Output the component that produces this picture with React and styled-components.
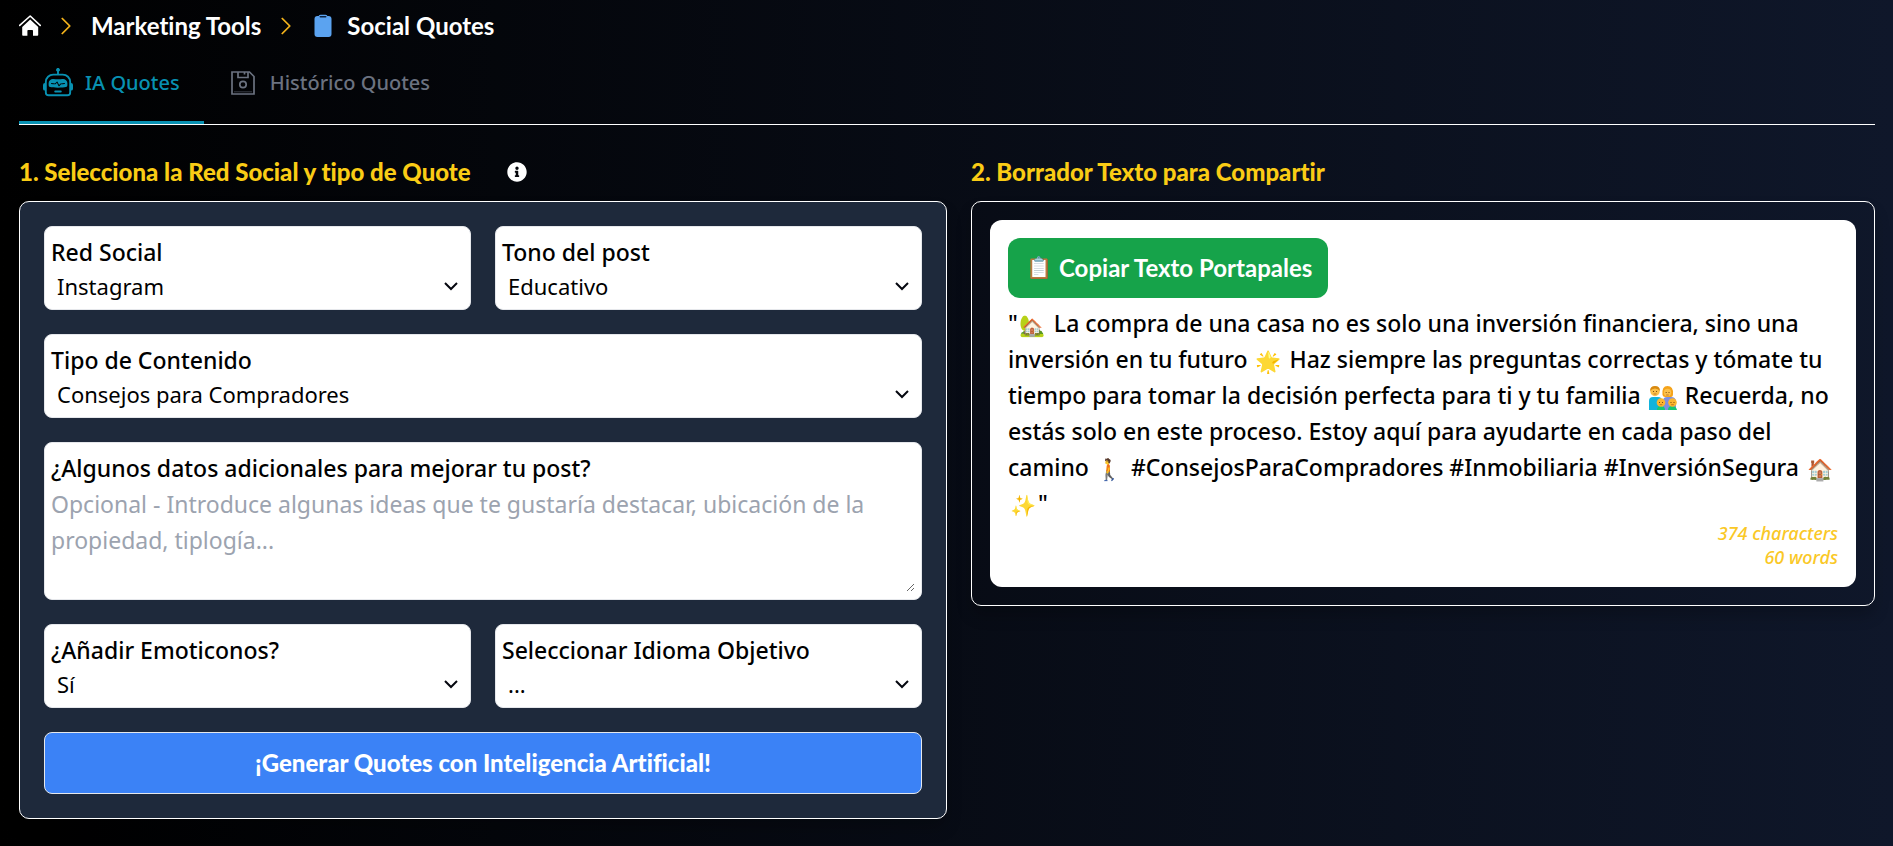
import React, { useState } from "react";
import styled, { createGlobalStyle } from "styled-components";
import { BsChevronRight, BsRobot } from "react-icons/bs";
import { FaInfoCircle } from "react-icons/fa";

const titleFont = `Lato, "Open Sans", sans-serif`;
const bodyFont = `"Noto Sans", "Open Sans", sans-serif`;

function HomeIcon() {
  return (
    <svg width="22" height="22" viewBox="0 0 22 22" aria-hidden="true">
      <path
        d="M1.500 10.400 12 1l10 9.400"
        transform="translate(-.8 0)"
        fill="none"
        stroke="#fff"
        strokeWidth="1.6"
        strokeLinecap="round"
        strokeLinejoin="round"
      />
      <path
        d="M11.200 4.400 19.200 12v8a.8.8 0 0 1-.8.8H14v-5a.8.8 0 0 0-.8-.8H9.200a.8.8 0 0 0-.8.8v5H4a.8.8 0 0 1-.8-.8v-8z"
        fill="#fff"
      />
    </svg>
  );
}

function ClipboardIcon() {
  return (
    <svg width="24" height="24" viewBox="0 0 24 24" aria-hidden="true">
      <rect x="3.500" y="2" width="17" height="21" rx="3" fill="#5ba3f0" />
      <rect x="7.500" y="0.8" width="9" height="4" rx="2" fill="#5ba3f0" />
      <rect x="8.500" y="2" width="7" height="1.6" rx="0.8" fill="#0c2340" />
    </svg>
  );
}

function SaveIcon() {
  return (
    <svg
      width="30"
      height="30"
      viewBox="0 0 30 30"
      fill="none"
      stroke="currentColor"
      strokeWidth="1.7"
      aria-hidden="true"
    >
      <path d="M4 4h17.500L26 8.500V26H4z" />
      <path d="M10 4v5.500h10V4M16.500 4v2.500" />
      <circle cx="15" cy="16.500" r="3.200" />
      <path d="M6.500 23.800h17" strokeDasharray="1 1" strokeWidth="1" />
    </svg>
  );
}

function FamilyIcon() {
  return (
    <FamilySvg viewBox="0 0 28 24" role="img" aria-label="Familia">
      <path d="M0 24V15q0-4 4-4h5q4 0 4 4v9z" fill="#12b3dc" />
      <path d="M14 24V15q0-4 4-4h4q5 0 5 5v8z" fill="#7c8fe0" />
      <path
        d="M13.500 9q-1-9 5-9t5.500 8q0 3-2 3h-6q-2 0-2.500-2z"
        fill="#f5a31a"
      />
      <circle cx="6" cy="5.500" r="4.700" fill="#fcc04a" />
      <path d="M1 5q0-5 5-5t5 5Q9 2.500 6 2.500T1 5z" fill="#d98a10" />
      <circle cx="18.500" cy="6.500" r="3.700" fill="#fcc04a" />
      <path d="M8 24q0-4 4-4t4 4z" fill="#16c872" />
      <path d="M19 24q0-4 4-4t5 4z" fill="#16c872" />
      <circle cx="12" cy="16.500" r="4.300" fill="#fcb62f" />
      <circle cx="23.500" cy="16.500" r="4.300" fill="#fcb62f" />
      <path
        d="M4.500 5v1M7.500 5v1M17.200 6v1M20 6v1M10.500 16v1M13.500 16v1M22 16v1M25 16v1"
        stroke="#7a4a10"
        strokeWidth="1"
      />
      <path
        d="M4.500 8h3M17.200 9h2.600M10.700 18.700h2.600M22.200 18.700h2.600"
        stroke="#b5651d"
        strokeWidth="0.800"
      />
    </FamilySvg>
  );
}

function SelectField({ id, label, options, wide }) {
  return (
    <Field $wide={wide}>
      <Label htmlFor={id}>{label}</Label>
      <SelectBox>
        <Select id={id} defaultValue={options[0]}>
          {options.map((option) => (
            <option key={option}>{option}</option>
          ))}
        </Select>
        <Arrow viewBox="0 0 14 9" aria-hidden="true">
          <path d="M1 1l6 6 6-6" />
        </Arrow>
      </SelectBox>
    </Field>
  );
}

function App() {
  const [tab, setTab] = useState("ia");

  return (
    <>
      <GlobalStyle />
      <Page>
        <Breadcrumb aria-label="breadcrumb">
          <Crumb href="#" aria-label="Inicio">
            <HomeIcon />
          </Crumb>
          <Separator />
          <Crumb href="#">Marketing Tools</Crumb>
          <Separator />
          <Crumb href="#">
            <ClipboardIcon />
            Social Quotes
          </Crumb>
        </Breadcrumb>

        <Tabs role="tablist">
          <Tab
            role="tab"
            aria-selected={tab === "ia"}
            $active={tab === "ia"}
            onClick={() => setTab("ia")}
          >
            <BsRobot size={30} />
            IA Quotes
          </Tab>
          <Tab
            role="tab"
            aria-selected={tab === "historico"}
            $active={tab === "historico"}
            onClick={() => setTab("historico")}
          >
            <SaveIcon />
            Histórico Quotes
          </Tab>
        </Tabs>

        <Columns>
          <section>
            <Title>
              1. Selecciona la Red Social y tipo de Quote
              <FaInfoCircle size={20} color="#fff" />
            </Title>
            <FormPanel onSubmit={(e) => e.preventDefault()}>
              <SelectField
                id="red"
                label="Red Social"
                options={["Instagram", "Facebook", "Linkedin", "Twitter"]}
              />
              <SelectField
                id="tono"
                label="Tono del post"
                options={["Educativo", "Profesional", "Divertido"]}
              />
              <SelectField
                id="tipo"
                label="Tipo de Contenido"
                options={["Consejos para Compradores"]}
                wide
              />
              <Field $wide>
                <Label htmlFor="datos">
                  ¿Algunos datos adicionales para mejorar tu post?
                </Label>
                <TextArea
                  id="datos"
                  placeholder="Opcional - Introduce algunas ideas que te gustaría destacar, ubicación de la propiedad, tiplogía..."
                />
              </Field>
              <SelectField
                id="emoticonos"
                label="¿Añadir Emoticonos?"
                options={["Sí", "No"]}
              />
              <SelectField
                id="idioma"
                label="Seleccionar Idioma Objetivo"
                options={["...", "Español", "Inglés"]}
              />
              <Generate type="submit">
                ¡Generar Quotes con Inteligencia Artificial!
              </Generate>
            </FormPanel>
          </section>

          <section>
            <Title>2. Borrador Texto para Compartir</Title>
            <ResultPanel>
              <Card>
                <CopyButton type="button">
                  <Emoji>📋</Emoji>
                  Copiar Texto Portapales
                </CopyButton>
                <Quote>
                  "<Emoji>🏡</Emoji> La compra de una casa no es solo una
                  inversión financiera, sino una inversión en tu futuro{" "}
                  <Emoji>🌟</Emoji> Haz siempre las preguntas correctas y tómate
                  tu tiempo para tomar la decisión perfecta para ti y tu familia{" "}
                  <FamilyIcon /> Recuerda, no estás solo en este proceso. Estoy
                  aquí para ayudarte en cada paso del camino{" "}
                  <Emoji>🚶</Emoji> #ConsejosParaCompradores #Inmobiliaria
                  #InversiónSegura <Emoji>🏠</Emoji>
                  <Emoji>✨</Emoji>"
                </Quote>
                <Stats>
                  <span>374 characters</span>
                  <span>60 words</span>
                </Stats>
              </Card>
            </ResultPanel>
          </section>
        </Columns>
      </Page>
    </>
  );
}

const GlobalStyle = createGlobalStyle`
  *, *::before, *::after {
    box-sizing: border-box;
  }

  body {
    margin: 0;
    background: #070b15;
  }

  button, select, textarea {
    font: inherit;
    color: inherit;
  }
`;

const Page = styled.main`
  min-height: 100vh;
  padding: 8px 18px 24px 19px;
  background: linear-gradient(to right, #000, #0f172a);
  font-family: ${bodyFont};
  font-size: 22px;
  line-height: 36px;
  color: #000;
`;

const Breadcrumb = styled.nav`
  display: flex;
  align-items: center;
  gap: 15px;
  height: 36px;
`;

const Crumb = styled.a`
  display: flex;
  align-items: center;
  gap: 12px;
  font-family: ${titleFont};
  font-size: 24px;
  font-weight: 700;
  font-variant-ligatures: none;
  color: #fff;
  text-decoration: none;
`;

const Separator = styled(BsChevronRight)`
  width: 20px;
  height: 20px;
  color: #fbb81c;
  stroke: currentColor;
  stroke-width: 0.3;
`;

const Tabs = styled.div`
  display: flex;
  border-bottom: 1px solid #fff;
`;

const Tab = styled.button`
  display: flex;
  align-items: center;
  gap: 12px;
  height: 80px;
  padding: 0 24px;
  border: 0;
  border-bottom: 3px solid ${(p) => (p.$active ? "#0891b2" : "transparent")};
  background: transparent;
  color: ${(p) => (p.$active ? "#0891b2" : "#6b7280")};
  font-size: 20px;
  font-weight: 500;
  cursor: pointer;
`;

const Columns = styled.div`
  display: grid;
  grid-template-columns: 928fr 904fr;
  align-items: start;
  gap: 24px;
  padding-top: 29px;
`;

const Title = styled.h2`
  display: flex;
  align-items: center;
  gap: 36px;
  margin: 0 0 11px;
  font-family: ${titleFont};
  font-size: 24px;
  font-weight: 900;
  font-variant-ligatures: none;
  line-height: 36px;
  color: #facc15;
`;

const FormPanel = styled.form`
  display: grid;
  grid-template-columns: 1fr 1fr;
  gap: 24px;
  padding: 24px;
  border: 1px solid #fff;
  border-radius: 10px;
  background: #1e293b;
  box-shadow: 0 10px 15px rgba(0, 0, 0, 0.2);
`;

const Field = styled.div`
  display: flex;
  flex-direction: column;
  grid-column: ${(p) => (p.$wide ? "1 / -1" : "auto")};
  padding: 7px 6px;
  border: 1px solid #e5e7eb;
  border-radius: 8px;
  background: #fff;
`;

const Label = styled.label`
  font-size: 23px;
  font-weight: 500;
  line-height: 36px;
`;

const SelectBox = styled.div`
  display: grid;
  align-items: center;
`;

const Select = styled.select`
  grid-area: 1 / 1;
  width: 100%;
  height: 32px;
  padding: 0 32px 0 6px;
  border: 0;
  background: transparent;
  appearance: none;
  line-height: 32px;
`;

const Arrow = styled.svg`
  grid-area: 1 / 1;
  justify-self: end;
  width: 14px;
  height: 9px;
  margin-right: 6px;
  pointer-events: none;

  path {
    fill: none;
    stroke: #05070f;
    stroke-width: 2;
  }
`;

const TextArea = styled.textarea`
  display: block;
  width: 100%;
  height: 106px;
  padding: 0;
  border: 0;
  background: transparent;
  font-size: 23px;
  line-height: 36px;
  resize: vertical;

  &::placeholder {
    color: #9ca3af;
  }
`;

const Generate = styled.button`
  grid-column: 1 / -1;
  height: 62px;
  border: 1px solid #e5e7eb;
  border-radius: 8px;
  background: #3b82f6;
  color: #fff;
  font-family: ${titleFont};
  font-size: 24px;
  font-weight: 900;
  font-variant-ligatures: none;
  cursor: pointer;
`;

const ResultPanel = styled.div`
  padding: 18px;
  border: 1px solid #fff;
  border-radius: 10px;
  box-shadow: 0 10px 15px rgba(0, 0, 0, 0.2);
`;

const Card = styled.div`
  padding: 18px;
  border-radius: 12px;
  background: #fff;
`;

const CopyButton = styled.button`
  display: flex;
  align-items: center;
  gap: 5px;
  height: 60px;
  margin-bottom: 7px;
  padding: 0 16px;
  border: 0;
  border-radius: 12px;
  background: #16a34a;
  color: #fff;
  font-family: ${titleFont};
  font-size: 24px;
  font-weight: 700;
  cursor: pointer;
`;

const Emoji = styled.span`
  display: inline-block;
  width: 30px;
  font-family: "Noto Color Emoji", sans-serif;
  font-size: 21px;
  line-height: 24px;
  text-align: center;
  vertical-align: middle;
`;

const FamilySvg = styled.svg`
  width: 28px;
  height: 24px;
  margin: 0 2px;
  vertical-align: middle;
`;

const Quote = styled.p`
  margin: 0;
  font-size: 23px;
  font-weight: 500;
`;

const Stats = styled.div`
  display: flex;
  flex-direction: column;
  align-items: flex-end;
  font-size: 18px;
  font-style: italic;
  font-weight: 500;
  line-height: 24px;
  color: #fac826;
`;

export default App;
